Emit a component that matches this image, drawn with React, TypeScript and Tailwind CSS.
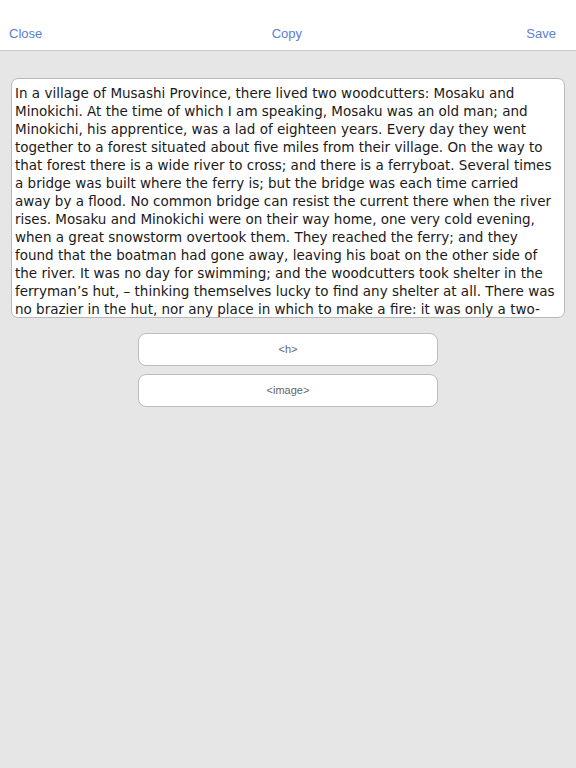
const lines = [
  "In a village of Musashi Province, there lived two woodcutters: Mosaku and",
  "Minokichi. At the time of which I am speaking, Mosaku was an old man; and",
  "Minokichi, his apprentice, was a lad of eighteen years. Every day they went",
  "together to a forest situated about five miles from their village. On the way to",
  "that forest there is a wide river to cross; and there is a ferryboat. Several times",
  "a bridge was built where the ferry is; but the bridge was each time carried",
  "away by a flood. No common bridge can resist the current there when the river",
  "rises. Mosaku and Minokichi were on their way home, one very cold evening,",
  "when a great snowstorm overtook them. They reached the ferry; and they",
  "found that the boatman had gone away, leaving his boat on the other side of",
  "the river. It was no day for swimming; and the woodcutters took shelter in the",
  "ferryman\u2019s hut, \u2013 thinking themselves lucky to find any shelter at all. There was",
  "no brazier in the hut, nor any place in which to make a fire: it was only a two-",
];

export default function App() {
  return (
    <div className="min-h-[768px] w-full bg-[#e6e6e6] font-['Liberation_Sans',sans-serif]">
      <header className="flex h-[51px] items-center justify-between border-b border-[#c8c8c8] bg-white px-[9px] pt-[17px] text-[13px] text-[#5a80d6]">
        <span>Close</span>
        <span className="pl-[5px]">Copy</span>
        <span className="pr-[11px]">Save</span>
      </header>

      <main className="flex flex-col items-center px-[11px] pt-[27px]">
        <div className="h-[240px] w-full overflow-hidden rounded-[7px] border border-[#b9b9b9] bg-white px-[3px] pt-[5px] font-['DejaVu_Sans',sans-serif] text-[13.5px] leading-[18px] text-[#1a1a1a]">
          {lines.map((line, i) => (
            <div key={i} className="whitespace-nowrap">
              {line}
            </div>
          ))}
        </div>

        <div className="mt-[15px] flex w-[300px] flex-col gap-[8px]">
          {["<h>", "<image>"].map((label) => (
            <button
              key={label}
              className="flex h-[33px] items-center justify-center rounded-[8px] border border-[#bdbdbd] bg-white text-[11px] text-[#666]"
            >
              {label}
            </button>
          ))}
        </div>
      </main>
    </div>
  );
}
